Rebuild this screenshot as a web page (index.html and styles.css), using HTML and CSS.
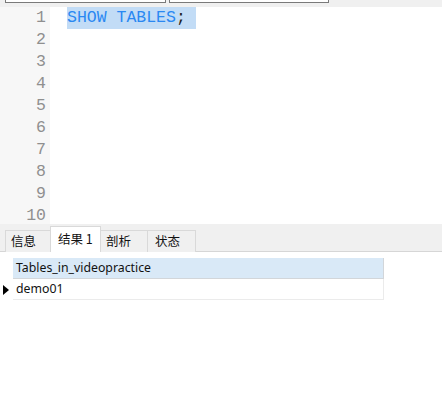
FILE: index.html
```html
<!DOCTYPE html>
<html>
<head>
<meta charset="utf-8">
<link rel="stylesheet" href="styles.css">
</head>
<body>
<div class="topbar">
  <div class="box box1"></div>
  <div class="box box2"></div>
</div>
<div class="editor">
  <div class="gutter">
    <div class="ln">1</div><div class="ln">2</div><div class="ln">3</div><div class="ln">4</div><div class="ln">5</div>
    <div class="ln">6</div><div class="ln">7</div><div class="ln">8</div><div class="ln">9</div><div class="ln">10</div>
  </div>
  <div class="code">
    <div class="line"><span class="sel"><span class="kw">SHOW TABLES</span><span class="punc">;</span> </span></div>
  </div>
</div>
<div class="tabbar">
  <div class="tab t1">信息</div>
  <div class="tab active t2">结果 1</div>
  <div class="tab t3">剖析</div>
  <div class="tab t4">状态</div>
</div>
<div class="panel">
  <div class="grid">
    <div class="row head">
      <div class="rh"></div>
      <div class="cell">Tables_in_videopractice</div>
    </div>
    <div class="row data">
      <div class="rh"><span class="tri"></span></div>
      <div class="cell">demo01</div>
    </div>
  </div>
</div>
</body>
</html>
```
FILE: styles.css
```css
html, body {
  margin: 0;
  padding: 0;
  background: #ffffff;
  width: 442px;
  height: 404px;
  overflow: hidden;
}
.topbar {
  height: 7px;
  background: #f0f0f0;
  display: flex;
  padding-left: 5px;
  gap: 3px;
  box-sizing: border-box;
}
.box {
  height: 2px;
  background: #ffffff;
  border: 1px solid #7a7a7a;
  border-top: none;
}
.box1 { width: 159px; }
.box2 { width: 158px; }
.editor {
  display: flex;
  height: 217px;
  background: #ffffff;
  font-family: "Liberation Mono", "DejaVu Sans Mono", monospace;
  font-size: 16.5px;
}
.gutter {
  width: 50px;
  background: #f7f7f7;
  box-sizing: border-box;
  padding-right: 4px;
}
.ln {
  height: 22px;
  line-height: 22px;
  text-align: right;
  color: #8f8f8f;
}
.code {
  padding-left: 17px;
}
.line {
  height: 22px;
  line-height: 22px;
}
.sel {
  background: #c2dcf6;
  display: inline-block;
  height: 22px;
  white-space: pre;
}
.kw { color: #2a88f2; }
.punc { color: #222222; }
.tabbar {
  height: 28px;
  background: #f0f0f0;
  border-bottom: 1px solid #d6d6d6;
  box-sizing: border-box;
  display: flex;
  align-items: flex-end;
  padding-left: 5px;
  font-family: "Noto Sans CJK SC", "Noto Sans", sans-serif;
  font-size: 12.5px;
  color: #111111;
}
.tab {
  height: 22px;
  line-height: 20px;
  box-sizing: border-box;
  border: 1px solid #d9d9d9;
  border-bottom: none;
  background: #f0f0f0;
  padding-left: 5px;
  margin-bottom: -1px;
}
.tab.active {
  height: 26px;
  line-height: 24px;
  background: #ffffff;
  border-color: #d9d9d9;
  padding-left: 7px;
  border-bottom: none;
}
.t1 { width: 45px; border-right: none; }
.t2 { width: 51px; }
.t3 { width: 47px; border-left: none; }
.t4 { width: 48px; border-left: none; padding-left: 7px; }
.panel {
  padding-top: 6px;
  font-family: "Noto Sans", "Noto Sans CJK SC", sans-serif;
  font-size: 12.3px;
  color: #111111;
}
.grid {
  width: 385px;
}
.row {
  display: flex;
  height: 21px;
}
.rh {
  width: 13px;
  flex: none;
  display: flex;
  align-items: center;
  padding-left: 3px;
  box-sizing: border-box;
}
.cell {
  width: 371px;
  box-sizing: border-box;
  padding-left: 3px;
  line-height: 20px;
}
.head .cell {
  background: #d9e9f7;
  border-bottom: 1px solid #d2d6da;
  border-right: 1px solid #d2d6da;
}
.data .cell {
  border-bottom: 1px solid #ebebeb;
  border-right: 1px solid #ebebeb;
}
.tri {
  width: 0;
  height: 0;
  border-top: 5px solid transparent;
  border-bottom: 5px solid transparent;
  border-left: 6px solid #000000;
}
```
